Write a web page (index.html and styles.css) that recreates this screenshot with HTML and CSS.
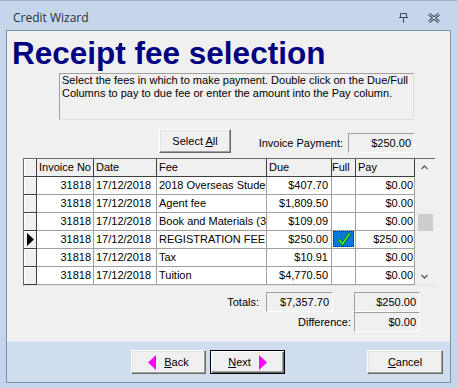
FILE: index.html
```html
<!DOCTYPE html>
<html lang="en">
<head>
  <meta charset="UTF-8">
  <title>Credit Wizard</title>
  <link rel="stylesheet" href="styles.css">
</head>
<body>
  <div class="titlebar">
    <span class="title">Credit Wizard</span>
    <span class="tb-icons">
      <svg class="pin" width="9" height="10" viewBox="0 0 9 10">
        <path d="M1.5 0.5h6v4h-6z M0 4.5h9 M4.5 5v5" fill="none" stroke="#3b4a5c" stroke-width="1"/>
      </svg>
      <svg class="close" width="14" height="10" viewBox="0 0 14 10">
        <path d="M2 1l10 8M12 1L2 9" stroke="#3b4a5c" stroke-width="3"/>
        <path d="M2 1l10 8M12 1L2 9" stroke="#e8eef6" stroke-width="1"/>
      </svg>
    </span>
  </div>

  <div class="frame">
    <div class="content">
      <h1>Receipt fee selection</h1>
      <div class="info">Select the fees in which to make payment. Double click on the Due/Full<br>Columns to pay to due fee or enter the amount into the Pay column.</div>

      <div class="toolbar">
        <button class="btn select-btn">Select <u>A</u>ll</button>
        <span class="label">Invoice Payment:</span>
        <div class="field pay-field">$250.00</div>
      </div>

      <div class="grid">
        <div class="rows">
          <div class="row head">
            <div class="c ind"></div>
            <div class="c inv">Invoice No</div>
            <div class="c date">Date</div>
            <div class="c fee">Fee</div>
            <div class="c due">Due</div>
            <div class="c full">Full</div>
            <div class="c pay">Pay</div>
          </div>
          <div class="row">
            <div class="c ind"></div>
            <div class="c inv num">31818</div>
            <div class="c date">17/12/2018</div>
            <div class="c fee">2018 Overseas Student Fee</div>
            <div class="c due num">$407.70</div>
            <div class="c full"></div>
            <div class="c pay num">$0.00</div>
          </div>
          <div class="row">
            <div class="c ind"></div>
            <div class="c inv num">31818</div>
            <div class="c date">17/12/2018</div>
            <div class="c fee">Agent fee</div>
            <div class="c due num">$1,809.50</div>
            <div class="c full"></div>
            <div class="c pay num">$0.00</div>
          </div>
          <div class="row">
            <div class="c ind"></div>
            <div class="c inv num">31818</div>
            <div class="c date">17/12/2018</div>
            <div class="c fee">Book and Materials (3+ weeks)</div>
            <div class="c due num">$109.09</div>
            <div class="c full"></div>
            <div class="c pay num">$0.00</div>
          </div>
          <div class="row">
            <div class="c ind">
              <svg width="7" height="13" viewBox="0 0 7 13"><path d="M0 0L7 6.5L0 13z" fill="#000"/></svg>
            </div>
            <div class="c inv num">31818</div>
            <div class="c date">17/12/2018</div>
            <div class="c fee">REGISTRATION FEE</div>
            <div class="c due num">$250.00</div>
            <div class="c full">
              <span class="checked">
                <svg width="14" height="14" viewBox="0 0 14 14">
                  <path d="M2 7.5L5.5 12L12.5 1.5" fill="none" stroke="#0b6b0b" stroke-width="3.2"/>
                  <path d="M2 7.5L5.5 12L12.5 1.5" fill="none" stroke="#3ef03e" stroke-width="1.6"/>
                </svg>
              </span>
            </div>
            <div class="c pay num">$250.00</div>
          </div>
          <div class="row">
            <div class="c ind"></div>
            <div class="c inv num">31818</div>
            <div class="c date">17/12/2018</div>
            <div class="c fee">Tax</div>
            <div class="c due num">$10.91</div>
            <div class="c full"></div>
            <div class="c pay num">$0.00</div>
          </div>
          <div class="row">
            <div class="c ind"></div>
            <div class="c inv num">31818</div>
            <div class="c date">17/12/2018</div>
            <div class="c fee">Tuition</div>
            <div class="c due num">$4,770.50</div>
            <div class="c full"></div>
            <div class="c pay num">$0.00</div>
          </div>
        </div>
        <div class="vscroll">
          <svg class="arrow" width="19" height="17" viewBox="0 0 19 17"><path d="M6.5 10L9.5 7L12.5 10" fill="none" stroke="#606060" stroke-width="1.4"/></svg>
          <div class="thumb"></div>
          <svg class="arrow down" width="19" height="17" viewBox="0 0 19 17"><path d="M6.5 7L9.5 10L12.5 7" fill="none" stroke="#606060" stroke-width="1.4"/></svg>
        </div>
      </div>

      <div class="totals">
        <span class="label">Totals:</span>
        <div class="field due-total">$7,357.70</div>
        <div class="field">$250.00</div>
      </div>
      <div class="totals diff">
        <span class="label">Difference:</span>
        <div class="field">$0.00</div>
      </div>
    </div>

    <div class="footer">
      <button class="btn nav-btn">
        <svg width="8" height="15" viewBox="0 0 8 15"><path d="M8 0L0 7.5L8 15z" fill="#ff00ff"/></svg>
        <span><u>B</u>ack</span>
      </button>
      <button class="btn nav-btn default">
        <span><u>N</u>ext</span>
        <svg width="8" height="15" viewBox="0 0 8 15"><path d="M0 0L8 7.5L0 15z" fill="#ff00ff"/></svg>
      </button>
      <button class="btn cancel-btn"><u>C</u>ancel</button>
    </div>
  </div>
</body>
</html>
```

FILE: styles.css
```css
body {
  margin: 0;
  background-color: #c5d6eb;
  font-family: "Liberation Sans", Arial, sans-serif;
  font-size: 11px;
  color: #000;
  border-top: 1px solid #a9b4c2;
}
.titlebar {
  height: 29px;
  display: flex;
  align-items: center;
  padding: 0 0 0 13px;
}
.title {
  font-family: "Open Sans", "Noto Sans", sans-serif;
  font-size: 12px;
  color: #2a2f36;
  padding-top: 4px;
}
.tb-icons {
  margin-left: auto;
  display: flex;
  align-items: center;
  padding-top: 5px;
}
.pin {
  margin-right: 19px;
}
.close {
  margin-right: 16px;
}
.frame {
  margin: 0 6px 0 6px;
  border: 1px solid #7f91a8;
}
.content {
  height: 310px;
  background-color: #f0f0f0;
  overflow: hidden;
}
h1 {
  margin: 5px 0 0 5px;
  height: 34px;
  line-height: 34px;
  font-size: 31.5px;
  font-weight: bold;
  color: #000080;
}
.info {
  box-sizing: border-box;
  width: 355px;
  height: 47px;
  margin: 3px 0 0 52px;
  padding: 0 2px;
  line-height: 13px;
  white-space: nowrap;
  border: 1px solid #a0a0a0;
  border-right-color: #dcdcdc;
  border-bottom-color: #dcdcdc;
}
.toolbar {
  display: flex;
  align-items: flex-start;
  height: 24px;
  margin-top: 9px;
  padding: 0 35px 0 152px;
}
.label {
  line-height: 20px;
}
.toolbar .label {
  margin: 4px 5px 0 auto;
}
.field {
  box-sizing: border-box;
  width: 67px;
  height: 20px;
  padding-right: 3px;
  line-height: 18px;
  text-align: right;
  background-color: #f0f0f0;
  border: 1px solid #a0a0a0;
  border-right-color: #fff;
  border-bottom-color: #fff;
}
.pay-field {
  margin-top: 4px;
}
.btn {
  box-sizing: border-box;
  height: 24px;
  padding: 0;
  font-family: "Liberation Sans", Arial, sans-serif;
  font-size: 11px;
  color: #000;
  background-color: #f0f0f0;
  border: 1px solid;
  border-color: #fff #696969 #696969 #fff;
  box-shadow: inset -1px -1px #a0a0a0, inset 1px 1px #e3e3e3;
}
.select-btn {
  width: 72px;
}
.grid {
  display: flex;
  width: 411px;
  margin: 5px 0 0 16px;
  border-top: 1px solid #696969;
  border-left: 1px solid #696969;
  border-bottom: 1px solid #e3e3e3;
}
.rows {
  width: 391px;
}
.row {
  display: flex;
  height: 18px;
}
.c {
  box-sizing: border-box;
  height: 18px;
  line-height: 17px;
  padding: 0 2px;
  white-space: nowrap;
  overflow: hidden;
  background-color: #fff;
  border-right: 1px solid #a0a0a0;
  border-bottom: 1px solid #a0a0a0;
}
.num {
  text-align: right;
}
.ind {
  width: 13px;
  padding: 0;
  background-color: #f0f0f0;
  border-right-color: #404040;
  border-bottom-color: #404040;
  box-shadow: inset 1px 1px #fff;
  display: flex;
  align-items: center;
  justify-content: center;
}
.head .c {
  background-color: #f0f0f0;
  border-right-color: #404040;
  border-bottom-color: #404040;
}
.inv { width: 57px; }
.date { width: 63px; }
.fee { width: 110px; }
.due { width: 65px; padding-right: 3px; }
.full { width: 24px; padding: 0; }
.pay { width: 59px; padding-right: 1px; }
.checked {
  display: flex;
  align-items: center;
  justify-content: center;
  box-sizing: border-box;
  width: 21px;
  height: 16px;
  margin: 0 0 0 1px;
  background-color: #0a78d7;
  outline: 1px dotted #222;
  outline-offset: -1px;
}
.vscroll {
  width: 19px;
  height: 126px;
  display: flex;
  flex-direction: column;
  background-color: #f0f0f0;
}
.thumb {
  width: 15px;
  height: 17px;
  margin: 38px 0 0 3px;
  background-color: #cdcdcd;
}
.arrow.down {
  margin-top: auto;
}
.totals {
  display: flex;
  justify-content: flex-end;
  align-items: center;
  padding-right: 30px;
  margin-top: 6px;
}
.totals .field {
  width: 66px;
}
.totals .due-total {
  width: 67px;
  margin-right: 21px;
  margin-left: 7px;
}
.diff {
  margin-top: 0;
}
.diff .label {
  margin-right: 3px;
}
.footer {
  box-sizing: border-box;
  height: 41px;
  display: flex;
  align-items: flex-start;
  padding: 8px 7px 0 124px;
  background-color: #d0ddee;
  border-top: 1px solid #e6ecf4;
}
.nav-btn {
  width: 75px;
  display: flex;
  align-items: center;
  justify-content: center;
  gap: 8px;
  margin-right: 4px;
}
.nav-btn svg {
  display: block;
}
.default {
  border: 1px solid #000;
  box-shadow: inset 1px 1px #fff, inset -1px -1px #696969, inset -2px -2px #a0a0a0;
}
.cancel-btn {
  width: 76px;
  margin-left: auto;
}
```
